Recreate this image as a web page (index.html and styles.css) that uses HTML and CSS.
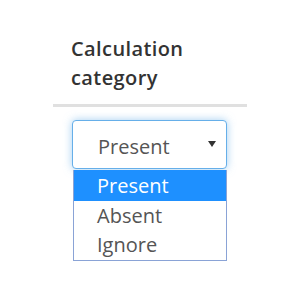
FILE: index.html
```html
<!DOCTYPE html>
<html lang="en">
  <head>
    <title>Calculation category</title>
    <link rel="stylesheet" href="styles.css">
  </head>
  <body>
    <div class="field">
      <div class="field-head">Calculation category</div>
      <div class="field-body">
        <div class="select">
          <span class="select-value">Present</span>
          <span class="select-arrow"></span>
        </div>
        <ul class="options">
          <li class="option selected">Present</li>
          <li class="option">Absent</li>
          <li class="option">Ignore</li>
        </ul>
      </div>
    </div>
  </body>
</html>
```

FILE: styles.css
```css
body {
  margin: 0;
  background: #fff;
  font-family: 'Open Sans', sans-serif;
  color: #333;
}

.field {
  width: 194px;
  margin: 0 0 0 53px;
  padding-top: 34px;
}

.field-head {
  padding: 0 10px 12px 18px;
  font-size: 20px;
  font-weight: 600;
  line-height: 29px;
  letter-spacing: 0.4px;
  border-bottom: 3px solid #e0e0e0;
  color: #333;
}

.field-body {
  padding: 13px 0 0 19px;
}

.select {
  height: 44px;
  border: 1px solid #66afe9;
  border-radius: 4px;
  box-shadow: 0 0 8px rgba(102, 175, 233, 0.6);
  display: flex;
  align-items: center;
  justify-content: space-between;
  padding: 3px 10px 0 25px;
  width: 118px;
  background: #fff;
}

.select-value {
  font-size: 20px;
  color: #555;
}

.select-arrow {
  width: 0;
  height: 0;
  border-left: 4px solid transparent;
  border-right: 4px solid transparent;
  border-top: 6px solid #333;
  margin-top: -4px;
}

.options {
  list-style: none;
  margin: 1px 0 0 1px;
  padding: 0 0 1px 0;
  width: 152px;
  border: 1px solid #8aa3d6;
  border-top: none;
  background: #fff;
}

.option {
  font-size: 20px;
  line-height: 29px;
  padding: 0 0 0 23px;
  color: #555;
}

.option.selected {
  background: #1e90ff;
  color: #fff;
  line-height: 31px;
}
```
